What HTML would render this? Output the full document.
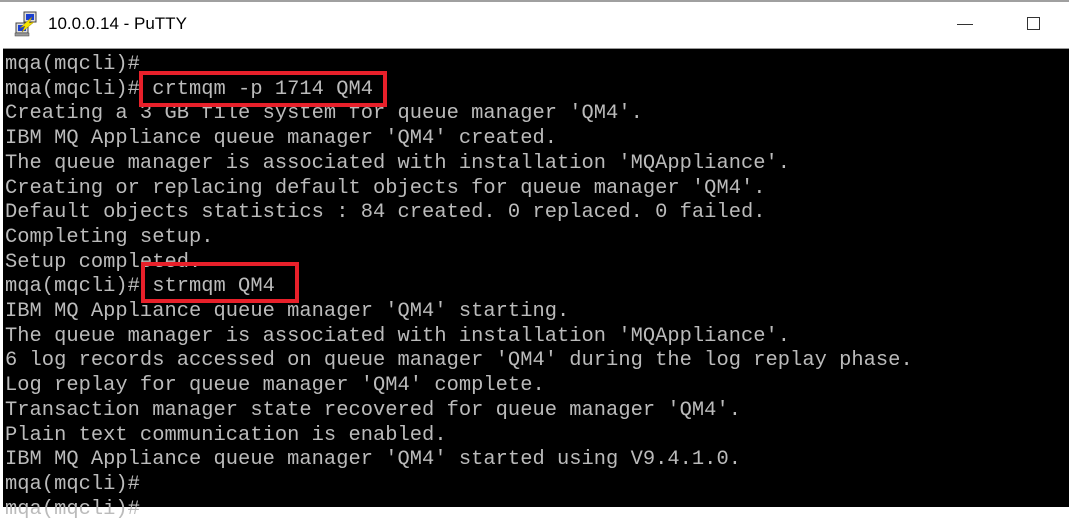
<!DOCTYPE html>
<html><head><meta charset="utf-8"><style>
html,body{margin:0;padding:0;width:1069px;height:507px;overflow:hidden;background:#fff}
.top{position:absolute;left:0;top:0;width:1069px;height:2px;background:#a0a0a0}
.title{position:absolute;left:48px;top:14px;font:17px "Liberation Sans",sans-serif;color:#000}
.term{position:absolute;left:3px;top:48px;width:1066px;height:459px;background:#000;border-top:1px solid #999;box-sizing:border-box}
pre{position:absolute;left:5px;top:53px;margin:0;font:20.4px/24.7px "Liberation Mono",monospace;color:#bbb;letter-spacing:0.03px}
.box{position:absolute;border:4px solid #e8202a;box-sizing:border-box}
</style></head><body>
<div class="top"></div>
<svg style="position:absolute;left:14px;top:11px" width="26" height="26" viewBox="0 0 26 26">
<rect x="10" y="1" width="12" height="10" fill="#ddd" stroke="#444"/><rect x="12" y="3" width="8" height="6" fill="#1a3fd0"/>
<rect x="2" y="12" width="12" height="10" fill="#ddd" stroke="#444"/><rect x="4" y="14" width="8" height="6" fill="#1a3fd0"/>
<rect x="1" y="22" width="14" height="3" fill="#999" stroke="#444" stroke-width=".5"/>
<path d="M6 17 L18 6 L15 12 L20 11 L8 21 L11 15Z" fill="#f5e400" stroke="#a08000" stroke-width=".5"/>
</svg>
<div class="title">10.0.0.14 - PuTTY</div>
<div style="position:absolute;left:957px;top:24px;width:16px;height:1px;background:#333"></div>
<div style="position:absolute;left:1027px;top:17px;width:13px;height:13px;border:1px solid #333;box-sizing:border-box"></div>
<div class="term"></div>
<pre>mqa(mqcli)#
mqa(mqcli)# crtmqm -p 1714 QM4
Creating a 3 GB file system for queue manager 'QM4'.
IBM MQ Appliance queue manager 'QM4' created.
The queue manager is associated with installation 'MQAppliance'.
Creating or replacing default objects for queue manager 'QM4'.
Default objects statistics : 84 created. 0 replaced. 0 failed.
Completing setup.
Setup completed.
mqa(mqcli)# strmqm QM4
IBM MQ Appliance queue manager 'QM4' starting.
The queue manager is associated with installation 'MQAppliance'.
6 log records accessed on queue manager 'QM4' during the log replay phase.
Log replay for queue manager 'QM4' complete.
Transaction manager state recovered for queue manager 'QM4'.
Plain text communication is enabled.
IBM MQ Appliance queue manager 'QM4' started using V9.4.1.0.
mqa(mqcli)#
mqa(mqcli)#</pre>
<div class="box" style="left:139px;top:71px;width:248px;height:36px"></div>
<div class="box" style="left:141px;top:262px;width:158px;height:41px"></div>
</body></html>
